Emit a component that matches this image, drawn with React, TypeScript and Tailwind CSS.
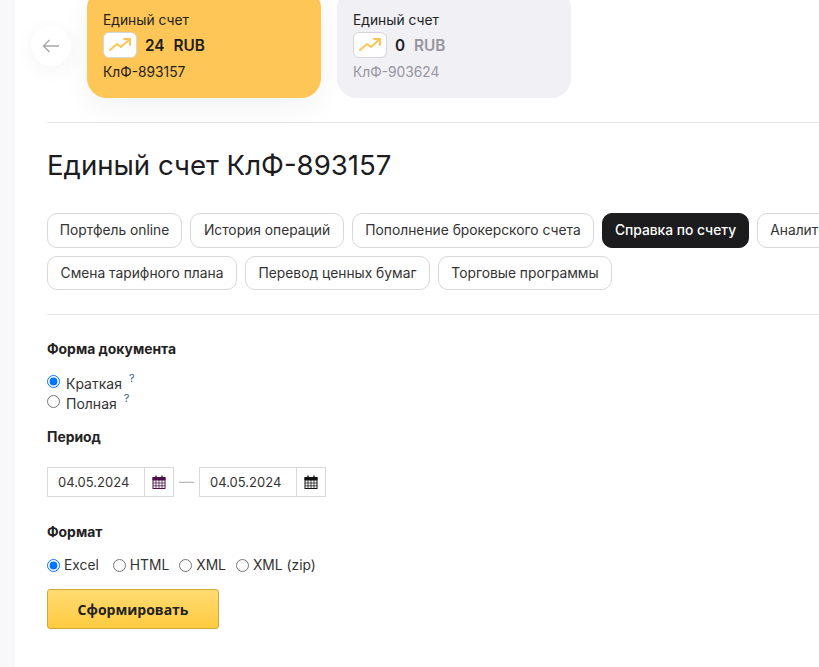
function TrendIcon() {
  return (
    <span className="flex h-[26px] w-[34px] items-center justify-center rounded-[6px] border border-[#d5d5da] bg-white">
      <svg width="24" height="16" viewBox="0 0 24 16" fill="none" stroke="#fcc557" strokeWidth="2" strokeLinecap="round" strokeLinejoin="round">
        <path d="M2 13 L9 7 L13 10 L22 2" />
        <path d="M16 2 H22 V8" />
      </svg>
    </span>
  );
}

function AccountCard({ sum, id, active }: { sum: string; id: string; active?: boolean }) {
  return (
    <div className={`flex h-[110px] w-[234px] flex-col justify-end rounded-[20px] px-4 pb-[18px] ${active ? 'bg-[#fec557] shadow-[0_10px_30px_rgba(0,0,0,0.05)]' : 'bg-[#f0f0f5]'}`}>
      <div className="text-[13.8px] leading-4 text-[#222]">Единый счет</div>
      <div className="mt-[4px] flex items-center gap-2 text-[15.3px] font-semibold leading-[26px]">
        <TrendIcon />
        <span className="flex translate-y-[1px] gap-[9px]">
          <span className="text-[#1c1c1e]">{sum}</span>
          <span className={active ? 'text-[#1c1c1e]' : 'text-[#97949f]'}>RUB</span>
        </span>
      </div>
      <div className={`mt-[6px] text-[13.8px] leading-4 ${active ? 'text-[#222]' : 'text-[#97949f]'}`}>{id}</div>
    </div>
  );
}

function Tab({ label, width, active }: { label: string; width: string; active?: boolean }) {
  return (
    <div className={`flex h-full shrink-0 items-center justify-center whitespace-nowrap rounded-[10px] border text-[13.8px] ${width} ${active ? 'border-[#1c1c1e] bg-[#1c1c1e] font-medium text-white' : 'border-[#d8d8d8] bg-white text-[#333]'}`}>
      {label}
    </div>
  );
}

function Radio({ checked, className }: { checked?: boolean; className?: string }) {
  return (
    <input
      type="radio"
      defaultChecked={checked}
      className={`h-[13px] w-[13px] shrink-0 accent-[#0075ff] ${className ?? ''}`}
    />
  );
}

function CalendarIcon({ color }: { color: string }) {
  return (
    <svg width="14" height="14" viewBox="0 0 14 14" fill="none" stroke={color} strokeWidth="1">
      <rect x="1" y="2.5" width="12" height="11" fill="none" />
      <path d="M1 2.5 H13 V5 H1 Z" fill={color} />
      <path d="M4 5V13.5M7 5V13.5M10 5V13.5M1 8H13M1 10.8H13" strokeOpacity="0.75" />
      <path d="M4 0.5V3M10 0.5V3" strokeWidth="1.4" />
    </svg>
  );
}

function DateField({ color }: { color: string }) {
  return (
    <div className="flex h-[30px] w-[127px] items-center border border-[#d9d9d9] text-[13px] text-[#333]">
      <span className="flex-1 pl-[10px] pt-[1px]">04.05.2024</span>
      <span className="flex h-full w-[29px] items-center justify-center border-l border-[#d9d9d9]">
        <CalendarIcon color={color} />
      </span>
    </div>
  );
}

function FormatOption({ label, checked, gap }: { label: string; checked?: boolean; gap: string }) {
  return (
    <label className={`flex items-center gap-[4px] ${gap}`}>
      <Radio checked={checked} />
      <span>{label}</span>
    </label>
  );
}

function DocRadio({ label, checked }: { label: string; checked?: boolean }) {
  return (
    <label className="flex h-[20px] items-center gap-[6px]">
      <Radio checked={checked} className="mb-[3px]" />
      <span>{label}</span>
      <span className="mb-[9px] ml-[1px] text-[11px] text-[#3a5a9c]">?</span>
    </label>
  );
}

export default function App() {
  return (
    <div className="h-[667px] w-[819px] overflow-hidden bg-white font-['Inter',sans-serif]">
      <div className="flex h-full">
        <div className="w-[15px] shrink-0 bg-[#f8f8fb]" />
        <div className="min-w-0 flex-1 pl-[32px]">
          {/* Accounts */}
          <div className="flex h-[98px] items-end">
            <button className="mb-[32px] ml-[-16px] flex h-10 w-10 shrink-0 items-center justify-center rounded-full bg-white shadow-[0_4px_20px_rgba(0,0,0,0.05)]">
              <svg width="18" height="14" viewBox="0 0 18 14" fill="none" stroke="#a9a9ad" strokeWidth="1.5">
                <path d="M17 7H1.5M7.5 1 L1.5 7 L7.5 13" />
              </svg>
            </button>
            <div className="ml-[16px] flex gap-4">
              <AccountCard sum="24" id="КлФ-893157" active />
              <AccountCard sum="0" id="КлФ-903624" />
            </div>
          </div>

          <div className="mt-[24px] h-px bg-[#e6e6e9]" />

          <h1 className="mt-[24px] text-[27.6px] font-normal leading-[36px] text-[#1c1c1e]">Единый счет КлФ-893157</h1>

          <div className="mt-[30px] flex w-[790px] flex-col gap-[8px]">
            <div className="flex h-[35px] gap-[8px]">
              <Tab label="Портфель online" width="w-[135px]" />
              <Tab label="История операций" width="w-[154px]" />
              <Tab label="Пополнение брокерского счета" width="w-[242px]" />
              <Tab label="Справка по счету" width="w-[147px]" active />
              <Tab label="Аналитика" width="w-[98px]" />
            </div>
            <div className="flex h-[34px] gap-[8px]">
              <Tab label="Смена тарифного плана" width="w-[190px]" />
              <Tab label="Перевод ценных бумаг" width="w-[185px]" />
              <Tab label="Торговые программы" width="w-[174px]" />
            </div>
          </div>

          <div className="mt-[24px] h-px bg-[#e6e6e9]" />

          <div className="mt-[26px] text-[13.9px] font-bold leading-4 text-[#222]">Форма документа</div>
          <div className="mt-[16px] text-[14px] text-[#333]">
            <DocRadio label="Краткая" checked />
            <DocRadio label="Полная" />
          </div>

          <div className="mt-[16px] text-[13.9px] font-bold leading-4 text-[#222]">Период</div>
          <div className="mt-[22px] flex items-center">
            <DateField color="#4b0f4b" />
            <span className="mx-[5px] w-[15px] text-center text-[15px] text-[#bbb]">—</span>
            <DateField color="#111" />
          </div>

          <div className="mt-[27px] text-[13.9px] font-bold leading-4 text-[#222]">Формат</div>
          <div className="mt-[16px] flex h-[18px] items-center text-[13.8px] text-[#333]">
            <FormatOption label="Excel" checked gap="mr-[14px]" />
            <FormatOption label="HTML" gap="mr-[10px]" />
            <FormatOption label="XML" gap="mr-[10px]" />
            <FormatOption label="XML (zip)" gap="" />
          </div>

          <button className="mt-[15px] h-[40px] w-[172px] rounded-[3px] border border-[#d0a83c] bg-gradient-to-b from-[#ffdb70] to-[#ffcb3e] font-['Open_Sans',sans-serif] text-[14px] font-bold text-[#222]">
            Сформировать
          </button>
        </div>
      </div>
    </div>
  );
}
